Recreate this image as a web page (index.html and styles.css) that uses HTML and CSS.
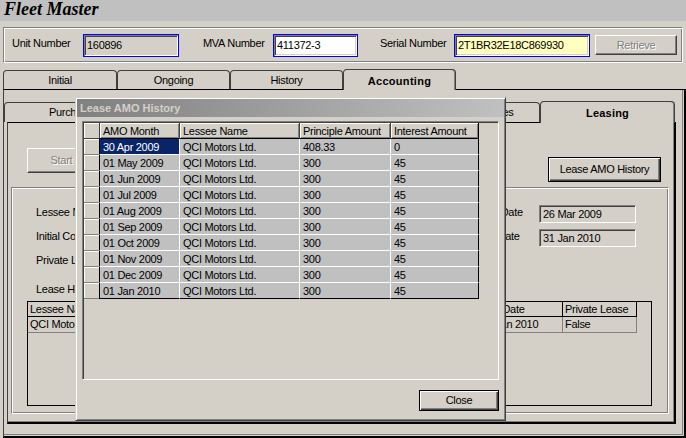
FILE: index.html
```html
<!DOCTYPE html>
<html>
<head>
<meta charset="utf-8">
<title>Fleet Master</title>
<link rel="stylesheet" href="styles.css">
</head>
<body>
<div class="app">
  <div class="title">Fleet Master</div>
  <div class="main">
    <div class="hdr">
      <span class="lbl l1">Unit Number</span>
      <div class="tb focus dis w1">160896</div>
      <span class="lbl l2">MVA Number</span>
      <div class="tb focus w2">411372-3</div>
      <span class="lbl l3">Serial Number</span>
      <div class="tb focus yel w3">2T1BR32E18C869930</div>
      <div class="btn disabled retrieve">Retrieve</div>
    </div>
    <div class="tabs otabs">
      <div class="tab">Initial</div>
      <div class="tab">Ongoing</div>
      <div class="tab">History</div>
      <div class="tab sel">Accounting</div>
    </div>
    <div class="panel">
      <div class="tabs itabs">
        <div class="tab">Purchase</div>
        <div class="tab">Depreciation</div>
        <div class="tab">Insurance</div>
        <div class="tab">Registration Fees</div>
        <div class="tab sel">Leasing</div>
      </div>
      <div class="panel2">
        <div class="toprow">
          <div class="btn disabled start">Start Lease</div>
          <div class="btn def amo">Lease AMO History</div>
        </div>
        <div class="group">
          <div class="form">
            <div class="frow">
              <div class="fleft"><span class="flbl">Lessee Name</span></div>
              <span class="flbl">Lease Start Date</span>
              <div class="ro date">26 Mar 2009</div>
            </div>
            <div class="frow">
              <div class="fleft"><span class="flbl">Initial Cost</span></div>
              <span class="flbl">Lease End Date</span>
              <div class="ro date">31 Jan 2010</div>
            </div>
            <div class="frow">
              <div class="fleft"><span class="flbl">Private Lease</span></div>
            </div>
            <div class="frow r4">
              <div class="fleft"><span class="flbl">Lease History</span></div>
            </div>
          </div>
          <div class="grid2">
            <div class="g2row">
              <div class="g2h">Lessee Name</div>
              <div class="g2h">Initial Cost</div>
              <div class="g2h">Monthly Amount</div>
              <div class="g2h">Start Date</div>
              <div class="g2h">End Date</div>
              <div class="g2h">Private Lease</div>
            </div>
            <div class="g2row">
              <div class="g2d">QCI Motors Ltd.</div>
              <div class="g2d">4500</div>
              <div class="g2d">300</div>
              <div class="g2d">26 Mar 2009</div>
              <div class="g2d">31 Jan 2010</div>
              <div class="g2d">False</div>
            </div>
          </div>
        </div>
      </div>
    </div>
  </div>

  <div class="dialog">
    <div class="dtitle">Lease AMO History</div>
    <div class="dgrid">
      <div class="grow">
        <div class="rh hcorner"></div>
        <div class="hc c1">AMO Month</div>
        <div class="hc">Lessee Name</div>
        <div class="hc">Principle Amount</div>
        <div class="hc c4">Interest Amount</div>
      </div>
      <div class="grow">
        <div class="rh"></div>
        <div class="dc c1 selc">30 Apr 2009</div>
        <div class="dc">QCI Motors Ltd.</div>
        <div class="dc">408.33</div>
        <div class="dc c4">0</div>
      </div>
      <div class="grow">
        <div class="rh"></div>
        <div class="dc c1">01 May 2009</div>
        <div class="dc">QCI Motors Ltd.</div>
        <div class="dc">300</div>
        <div class="dc c4">45</div>
      </div>
      <div class="grow">
        <div class="rh"></div>
        <div class="dc c1">01 Jun 2009</div>
        <div class="dc">QCI Motors Ltd.</div>
        <div class="dc">300</div>
        <div class="dc c4">45</div>
      </div>
      <div class="grow">
        <div class="rh"></div>
        <div class="dc c1">01 Jul 2009</div>
        <div class="dc">QCI Motors Ltd.</div>
        <div class="dc">300</div>
        <div class="dc c4">45</div>
      </div>
      <div class="grow">
        <div class="rh"></div>
        <div class="dc c1">01 Aug 2009</div>
        <div class="dc">QCI Motors Ltd.</div>
        <div class="dc">300</div>
        <div class="dc c4">45</div>
      </div>
      <div class="grow">
        <div class="rh"></div>
        <div class="dc c1">01 Sep 2009</div>
        <div class="dc">QCI Motors Ltd.</div>
        <div class="dc">300</div>
        <div class="dc c4">45</div>
      </div>
      <div class="grow">
        <div class="rh"></div>
        <div class="dc c1">01 Oct 2009</div>
        <div class="dc">QCI Motors Ltd.</div>
        <div class="dc">300</div>
        <div class="dc c4">45</div>
      </div>
      <div class="grow">
        <div class="rh"></div>
        <div class="dc c1">01 Nov 2009</div>
        <div class="dc">QCI Motors Ltd.</div>
        <div class="dc">300</div>
        <div class="dc c4">45</div>
      </div>
      <div class="grow">
        <div class="rh"></div>
        <div class="dc c1">01 Dec 2009</div>
        <div class="dc">QCI Motors Ltd.</div>
        <div class="dc">300</div>
        <div class="dc c4">45</div>
      </div>
      <div class="grow last">
        <div class="rh"></div>
        <div class="dc c1">01 Jan 2010</div>
        <div class="dc">QCI Motors Ltd.</div>
        <div class="dc">300</div>
        <div class="dc c4">45</div>
      </div>
    </div>
    <div class="btn def close">Close</div>
  </div>
</div>
</body>
</html>
```

FILE: styles.css
```css
* { box-sizing: border-box; }
html, body { margin: 0; padding: 0; }
body {
  width: 686px;
  height: 438px;
  overflow: hidden;
  background: #d4d0c8;
  font-family: "Liberation Sans", Arial, sans-serif;
  font-size: 11px;
  letter-spacing: -0.3px;
  color: #000;
}
.app { position: relative; width: 686px; height: 438px; }

.title {
  height: 21px;
  background: #c0c0c0;
  font-family: "Liberation Serif", "Times New Roman", serif;
  font-weight: bold;
  font-style: italic;
  font-size: 18px;
  line-height: 18px;
  letter-spacing: 0;
  padding-left: 4px;
}
.main { padding-top: 6px; }

/* header groove box */
.hdr {
  margin: 0 3px;
  height: 36px;
  display: flex;
  align-items: center;
  border: 1px solid;
  border-color: #808080 #fff #fff #808080;
  box-shadow: inset 1px 1px 0 #fff, inset -1px -1px 0 #808080;
}
.lbl { line-height: 13px; margin-bottom: 4px; white-space: nowrap; }
.l1 { margin-left: 8px; width: 71px; }
.l2 { margin-left: 24px; width: 70px; }
.l3 { margin-left: 22px; width: 74px; }

.tb {
  height: 23px;
  border: 1px solid #0000ff;
  line-height: 21px;
  padding-left: 3px;
  background: #fff;
  white-space: nowrap;
  box-shadow: inset 1px 1px 0 #808080, inset -1px -1px 0 #fff, inset 2px 2px 0 #404040, inset -2px -2px 0 #d4d0c8;
}
.tb.dis { background: #d4d0c8; }
.tb.yel { background: #ffffc0; }
.w1 { width: 96px; }
.w2 { width: 85px; }
.w3 { width: 136px; }

.btn {
  background: #d4d0c8;
  border: 1px solid;
  border-color: #fff #404040 #404040 #fff;
  box-shadow: inset -1px -1px 0 #808080;
  text-align: center;
  white-space: nowrap;
}
.btn.disabled { color: #808080; text-shadow: 1px 1px 0 #fff; }
.btn.def {
  border: 1px solid #000;
  box-shadow: inset 1px 1px 0 #fff, inset -1px -1px 0 #404040, inset -2px -2px 0 #808080;
}
.retrieve { margin-left: 5px; width: 82px; height: 20px; line-height: 18px; }

/* tabs */
.tabs { display: flex; align-items: flex-end; }
.tab {
  height: 19px;
  width: 113px;
  border: 1px solid #404040;
  border-bottom: 0;
  border-radius: 4px 4px 0 0;
  background: #d4d0c8;
  text-align: center;
  line-height: 18px;
  white-space: nowrap;
  overflow: hidden;
}
.tab.sel {
  height: 21px;
  margin-bottom: -1px;
  padding-top: 2px;
  font-weight: bold;
  letter-spacing: 0.3px;
  position: relative;
  z-index: 1;
  box-shadow: inset -1px 0 0 #808080;
}
.otabs { height: 20px; margin-top: 6px; padding-left: 3px; }
.otabs .tab:first-child { width: 114px; }

.panel {
  margin-left: 3px;
  width: 683px;
  height: 349px;
  border: 1px solid #404040;
  border-top-color: #000;
  border-right: 2px solid #000;
  border-bottom: 2px solid #000;
  box-shadow: inset -1px -1px 0 #d4d0c8, inset -2px -2px 0 #808080;
}
.itabs { height: 21px; margin-top: 11px; }
.itabs .tab { width: 134px; height: 20px; }
.itabs .tab.sel { width: 135px; height: 22px; letter-spacing: 0.2px; }

.panel2 {
  margin-left: 3px;
  width: 669px;
  height: 302px;
  border: 1px solid #404040;
  border-top-color: #000;
  border-right: 2px solid #000;
  border-bottom: 2px solid #000;
  box-shadow: inset -1px -1px 0 #808080;
}
.toprow { display: flex; align-items: flex-start; padding-top: 25px; height: 59px; }
.start { margin-left: 19px; width: 100px; height: 25px; line-height: 23px; }
.amo { margin-left: auto; margin-right: 13px; margin-top: 9px; width: 113px; height: 25px; line-height: 23px; }

.group {
  margin: 5px 5px 0 3px;
  height: 227px;
  border: 1px solid;
  border-color: #808080 #fff #fff #808080;
  box-shadow: inset 1px 1px 0 #fff, inset -1px -1px 0 #808080;
}
.form { padding-top: 12px; }
.frow {
  display: grid;
  grid-template-columns: 409px 94px 97px;
  height: 24px;
  padding-left: 24px;
}
.frow.r4 { margin-top: 5px; }
.fleft { display: flex; }
.flbl { line-height: 24px; white-space: nowrap; }
.ro {
  margin-top: 5px;
  height: 18px;
  line-height: 16px;
  padding-left: 3px;
  background: #d4d0c8;
  white-space: nowrap;
  border: 1px solid;
  border-color: #808080 #fff #fff #808080;
  box-shadow: inset 1px 1px 0 #404040, inset -1px -1px 0 #d4d0c8;
}
.ro.date { width: 97px; }

.grid2 {
  margin-left: 15px;
  width: 625px;
  height: 105px;
  border: 1px solid #000;
  background: #d4d0c8;
}
.g2row { display: grid; grid-template-columns: 110px 100px 100px 141px 84px 74px; }
.g2h {
  height: 15px;
  line-height: 14px;
  padding-left: 2px;
  border-right: 1px solid #000;
  border-bottom: 1px solid #000;
  white-space: nowrap;
  overflow: hidden;
}
.g2d {
  height: 16px;
  line-height: 15px;
  padding-left: 2px;
  border-right: 1px solid #808080;
  border-bottom: 1px solid #808080;
  white-space: nowrap;
  overflow: hidden;
}

/* dialog */
.dialog {
  position: absolute;
  left: 75px;
  top: 97px;
  width: 431px;
  height: 324px;
  background: #d4d0c8;
  border: 1px solid;
  border-color: #d4d0c8 #404040 #404040 #d4d0c8;
  box-shadow: inset 1px 1px 0 #fff, inset -1px -1px 0 #808080;
  padding: 1px;
  display: flex;
  flex-direction: column;
}
.dtitle {
  height: 18px;
  background: linear-gradient(to right, #808080, #c0c0c0);
  color: #d4d0c8;
  font-weight: bold;
  letter-spacing: 0;
  line-height: 18px;
  padding-left: 3px;
  white-space: nowrap;
}
.dgrid {
  margin: 4px 0 0 5px;
  width: 417px;
  height: 259px;
  border: 1px solid;
  border-color: #808080 #fff #fff #808080;
  box-shadow: inset 1px 1px 0 #404040, inset -1px -1px 0 #d4d0c8;
  padding: 1px;
}
.grow { display: grid; grid-template-columns: 15px 81px 120px 91px 88px; }
.rh {
  height: 16px;
  background: #d4d0c8;
  border-bottom: 1px solid #808080;
  box-shadow: inset 1px 1px 0 #fff;
}
.hcorner { border-bottom-color: #404040; }
.hc {
  height: 16px;
  padding: 2px 0 0 3px;
  line-height: 13px;
  background: #d4d0c8;
  border-right: 1px solid #404040;
  border-bottom: 1px solid #000;
  box-shadow: inset 1px 1px 0 #fff, inset -1px -1px 0 #808080;
  white-space: nowrap;
  overflow: hidden;
}
.hc.c1 { border-left: 1px solid #404040; }
.hc.c4 { border-right-color: #000; }
.dc {
  height: 16px;
  padding: 2px 0 0 3px;
  line-height: 13px;
  background: #c0c0c0;
  border-right: 1px solid #fff;
  border-bottom: 1px solid #fff;
  white-space: nowrap;
  overflow: hidden;
}
.dc.c1 { border-left: 1px solid #000; }
.dc.c4 { border-right-color: #000; }
.grow.last .dc { border-bottom-color: #000; }
.dc.selc { background: #0a246a; color: #fff; }
.close {
  align-self: flex-end;
  margin: 10px 5px 0 0;
  width: 80px;
  height: 21px;
  line-height: 19px;
}
```
